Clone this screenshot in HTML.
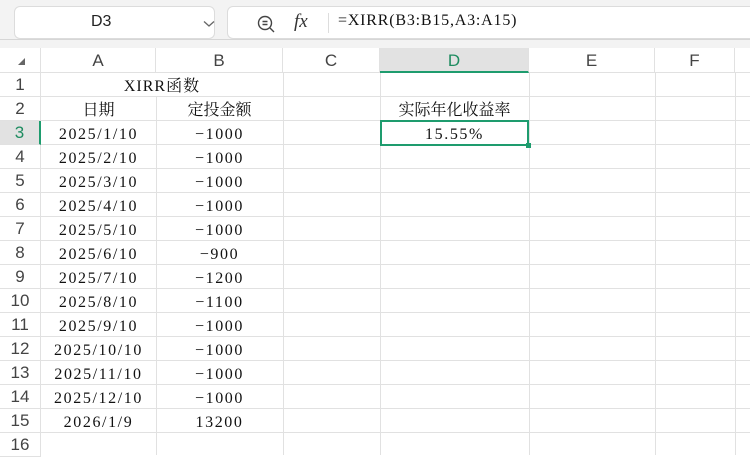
<!DOCTYPE html>
<html><head><meta charset="utf-8"><style>
*{margin:0;padding:0;box-sizing:border-box}
body{width:750px;height:455px;overflow:hidden;background:#fff;position:relative;font-family:"Liberation Sans","Noto Sans CJK SC",sans-serif}
.top{position:absolute;left:0;top:0;width:750px;height:48px;background:#f3f3f3}
.nb{position:absolute;left:14px;top:6px;width:201px;height:33px;background:#fff;border:1px solid #dcdcdc;border-radius:6px}
.fb{position:absolute;left:227px;top:6px;width:540px;height:33px;background:#fff;border:1px solid #dcdcdc;border-radius:6px}
.ch{position:absolute;top:48px;height:25px;background:#fff;border-right:1px solid #e1e1e1;border-bottom:1px solid #e1e1e1;color:#444;font-size:17px;text-align:center;line-height:25px}
.rh{position:absolute;left:0;width:41px;height:24px;border-bottom:1px solid #e1e1e1;border-right:1px solid #e1e1e1;color:#444;font-size:17px;text-align:center;line-height:24px;background:#fff}
.hl{position:absolute;height:1px;left:41px;width:709px;background:#e1e1e1}
.vl{position:absolute;width:1px;top:73px;height:382px;background:#e1e1e1}
.c{position:absolute;height:24px;line-height:24px;padding-top:2px;text-align:center;font-family:"Liberation Serif","Noto Serif CJK SC",serif;font-size:16px;color:#111;letter-spacing:1.6px}
.z{letter-spacing:0}
</style></head><body>
<div class="top"></div>
<div style="position:absolute;left:0;top:39px;width:750px;height:1px;background:#d6d6d6"></div>
<div class="nb"><span style="position:absolute;left:76px;top:6px;font-size:16px;color:#222">D3</span>
<svg style="position:absolute;left:188px;top:13px" width="12" height="8"><path d="M1 1.5L6 6L11 1.5" fill="none" stroke="#666" stroke-width="1.3"/></svg></div>
<div class="fb">
<svg style="position:absolute;left:28px;top:7px" width="20" height="20"><circle cx="9" cy="9" r="6.5" fill="none" stroke="#444" stroke-width="1.4"/><path d="M14 14L18 18M6.5 7.5H11.5M6.5 10.5H11.5" stroke="#444" stroke-width="1.4"/></svg>
<span style="position:absolute;left:66px;top:4px;font-family:'Liberation Serif',serif;font-style:italic;font-size:19px;color:#333">fx</span>
<div style="position:absolute;left:100px;top:6px;width:1px;height:20px;background:#ddd"></div>
<span style="position:absolute;left:110px;top:5px;font-family:'Liberation Serif','Noto Serif CJK SC',serif;font-size:16px;color:#111;letter-spacing:0.8px">=XIRR(B3:B15,A3:A15)</span>
</div>
<div class="ch" style="left:0;width:41px"><svg width="10" height="10" style="position:absolute;left:17px;top:9px"><path d="M8 1V8H1Z" fill="#666"/></svg></div>
<div class="ch" style="left:41px;width:115px">A</div>
<div class="ch" style="left:156px;width:127px">B</div>
<div class="ch" style="left:283px;width:97px">C</div>
<div class="ch" style="left:380px;width:149px;background:#e2e2e2;color:#1e8c60;border-bottom:2px solid #1e9c6e">D</div>
<div class="ch" style="left:529px;width:126px">E</div>
<div class="ch" style="left:655px;width:80px">F</div>
<div class="ch" style="left:735px;width:20px"></div>

<div class="vl" style="left:156px"></div><div class="vl" style="left:283px"></div><div class="vl" style="left:380px"></div><div class="vl" style="left:529px"></div><div class="vl" style="left:655px"></div><div class="vl" style="left:735px"></div>
<div class="hl" style="top:120px"></div><div class="hl" style="top:144px"></div><div class="hl" style="top:168px"></div><div class="hl" style="top:192px"></div><div class="hl" style="top:216px"></div><div class="hl" style="top:240px"></div><div class="hl" style="top:264px"></div><div class="hl" style="top:288px"></div><div class="hl" style="top:312px"></div><div class="hl" style="top:336px"></div><div class="hl" style="top:360px"></div><div class="hl" style="top:384px"></div><div class="hl" style="top:408px"></div><div class="hl" style="top:432px"></div>
<div style="position:absolute;left:41px;top:73px;width:242px;height:24px;background:#fff"></div>
<div class="hl" style="top:96px;left:41px"></div>

<div class="rh" style="top:73px">1</div><div class="rh" style="top:97px">2</div>
<div class="rh" style="top:121px;background:#e2e2e2;color:#1e8c60;border-right:2px solid #1e9c6e">3</div>
<div class="rh" style="top:145px">4</div><div class="rh" style="top:169px">5</div><div class="rh" style="top:193px">6</div><div class="rh" style="top:217px">7</div><div class="rh" style="top:241px">8</div><div class="rh" style="top:265px">9</div><div class="rh" style="top:289px">10</div><div class="rh" style="top:313px">11</div><div class="rh" style="top:337px">12</div><div class="rh" style="top:361px">13</div><div class="rh" style="top:385px">14</div><div class="rh" style="top:409px">15</div><div class="rh" style="top:433px">16</div>

<div class="c" style="left:41px;width:242px;top:73px;letter-spacing:1px">XIRR函数</div>
<div class="c z" style="left:41px;width:115px;top:97px">日期</div>
<div class="c z" style="left:156px;width:127px;top:97px">定投金额</div>
<div class="c z" style="left:380px;width:149px;top:97px">实际年化收益率</div>

<div class="c" style="left:41px;width:115px;top:121px">2025/1/10</div><div class="c" style="left:156px;width:127px;top:121px">−1000</div>
<div class="c" style="left:41px;width:115px;top:145px">2025/2/10</div><div class="c" style="left:156px;width:127px;top:145px">−1000</div>
<div class="c" style="left:41px;width:115px;top:169px">2025/3/10</div><div class="c" style="left:156px;width:127px;top:169px">−1000</div>
<div class="c" style="left:41px;width:115px;top:193px">2025/4/10</div><div class="c" style="left:156px;width:127px;top:193px">−1000</div>
<div class="c" style="left:41px;width:115px;top:217px">2025/5/10</div><div class="c" style="left:156px;width:127px;top:217px">−1000</div>
<div class="c" style="left:41px;width:115px;top:241px">2025/6/10</div><div class="c" style="left:156px;width:127px;top:241px">−900</div>
<div class="c" style="left:41px;width:115px;top:265px">2025/7/10</div><div class="c" style="left:156px;width:127px;top:265px">−1200</div>
<div class="c" style="left:41px;width:115px;top:289px">2025/8/10</div><div class="c" style="left:156px;width:127px;top:289px">−1100</div>
<div class="c" style="left:41px;width:115px;top:313px">2025/9/10</div><div class="c" style="left:156px;width:127px;top:313px">−1000</div>
<div class="c" style="left:41px;width:115px;top:337px">2025/10/10</div><div class="c" style="left:156px;width:127px;top:337px">−1000</div>
<div class="c" style="left:41px;width:115px;top:361px">2025/11/10</div><div class="c" style="left:156px;width:127px;top:361px">−1000</div>
<div class="c" style="left:41px;width:115px;top:385px">2025/12/10</div><div class="c" style="left:156px;width:127px;top:385px">−1000</div>
<div class="c" style="left:41px;width:115px;top:409px">2026/1/9</div><div class="c" style="left:156px;width:127px;top:409px">13200</div>

<div style="position:absolute;left:380px;top:120px;width:149px;height:26px;border:2px solid #1e9c6e;background:#fff"></div>
<div style="position:absolute;left:526px;top:143px;width:5px;height:5px;background:#1e9c6e"></div>
<div class="c" style="left:380px;width:149px;top:121px">15.55%</div>
</body></html>
